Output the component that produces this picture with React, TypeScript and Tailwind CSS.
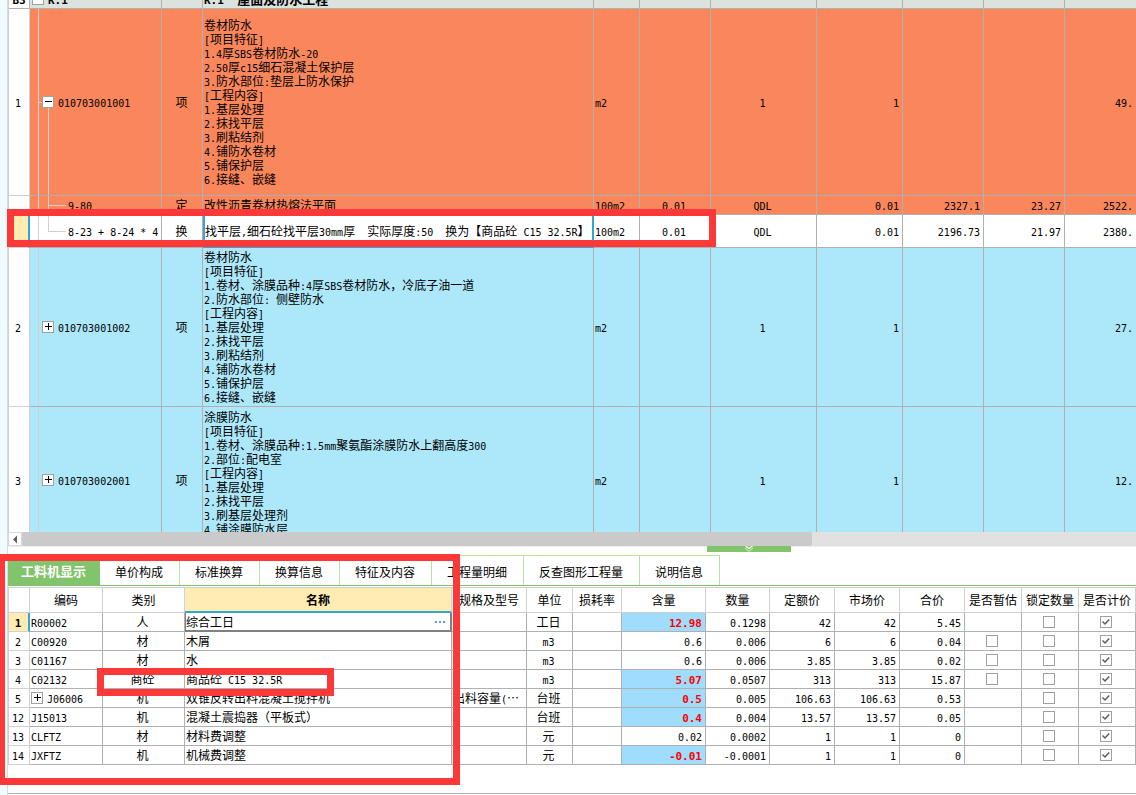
import React from 'react'

/* Half-width characters are set in a monospace face half as wide as a CJK glyph. */
function Mixed({ text, large = false }: { text: string; large?: boolean }) {
  const runs = text.match(/[\x20-\x7e]+|[^\x20-\x7e]+/g) ?? []
  return (
    <>
      {runs.map((run, i) =>
        /^[\x20-\x7e]/.test(run) ? (
          <span
            key={i}
            className={
              large
                ? "font-['DejaVu_Sans_Mono',monospace] text-[11px] leading-none"
                : "font-['DejaVu_Sans_Mono',monospace] text-[10px] leading-none"
            }
          >
            {run}
          </span>
        ) : (
          <span key={i}>{run}</span>
        ),
      )}
    </>
  )
}

function Expander({ open = false, label }: { open?: boolean; label: string }) {
  return (
    <button
      type="button"
      aria-label={label}
      aria-expanded={open}
      className="flex size-3 shrink-0 items-center justify-center border border-[#a0a0a0] bg-white"
    >
      <svg viewBox="0 0 10 10" className="size-[10px]" shapeRendering="crispEdges">
        <rect x="2" y="4" width="7" height="1" fill="#000" />
        {!open && <rect x="5" y="1" width="1" height="7" fill="#000" />}
      </svg>
    </button>
  )
}

function Check({ checked = false, label }: { checked?: boolean; label: string }) {
  return (
    <label className="relative mx-auto block size-3">
      <input
        type="checkbox"
        aria-label={label}
        defaultChecked={checked}
        className="peer block size-3 appearance-none border border-[#a0a0a0] bg-white"
      />
      <svg
        viewBox="0 0 12 12"
        className="pointer-events-none absolute inset-0 hidden size-3 peer-checked:block"
        fill="none"
        stroke="#5c5c6c"
        strokeWidth="1.5"
      >
        <path d="M2.5 5.5 L5 8 L9.2 3.4" />
      </svg>
    </label>
  )
}

type Item = {
  no: string
  code: string
  kind: string
  lines: string[]
  unit: string
  factor?: string
  expr: string
  qty: string
  price?: string
  total?: string
  sum: string
  look: 'orange' | 'white' | 'blue'
  height: string
  child?: boolean
  open?: boolean
  selected?: boolean
  clipped?: boolean
}

const items: Item[] = [
  {
    no: '1', code: '010703001001', kind: '项', unit: 'm2', expr: '1', qty: '1', sum: '49.',
    look: 'orange', height: 'h-[187px]', open: true,
    lines: [
      '卷材防水', '[项目特征]', '1.4厚SBS卷材防水-20', '2.50厚c15细石混凝土保护层', '3.防水部位:垫层上防水保护',
      '[工程内容]', '1.基层处理', '2.抹找平层', '3.刷粘结剂', '4.铺防水卷材', '5.铺保护层', '6.接缝、嵌缝',
    ],
  },
  {
    no: '', code: '9-80', kind: '定', unit: '100m2', factor: '0.01', expr: 'QDL', qty: '0.01',
    price: '2327.1', total: '23.27', sum: '2522.', look: 'orange', height: 'h-[19px]', child: true,
    lines: ['改性沥青卷材热熔法平面'],
  },
  {
    no: '', code: '8-23 + 8-24 * 4', kind: '换', unit: '100m2', factor: '0.01', expr: 'QDL', qty: '0.01',
    price: '2196.73', total: '21.97', sum: '2380.', look: 'white', height: 'h-[33px]', child: true, selected: true,
    lines: ['找平层,细石砼找平层30mm厚  实际厚度:50  换为【商品砼 C15 32.5R】'],
  },
  {
    no: '2', code: '010703001002', kind: '项', unit: 'm2', expr: '1', qty: '1', sum: '27.',
    look: 'blue', height: 'h-[159px]',
    lines: [
      '卷材防水', '[项目特征]', '1.卷材、涂膜品种:4厚SBS卷材防水，冷底子油一道', '2.防水部位: 侧壁防水', '[工程内容]',
      '1.基层处理', '2.抹找平层', '3.刷粘结剂', '4.铺防水卷材', '5.铺保护层', '6.接缝、嵌缝',
    ],
  },
  {
    no: '3', code: '010703002001', kind: '项', unit: 'm2', expr: '1', qty: '1', sum: '12.',
    look: 'blue', height: 'h-[146px]', clipped: true,
    lines: [
      '涂膜防水', '[项目特征]', '1.卷材、涂膜品种:1.5mm聚氨酯涂膜防水上翻高度300', '2.部位:配电室', '[工程内容]',
      '1.基层处理', '2.抹找平层', '3.刷基层处理剂', '4.铺涂膜防水层',
    ],
  },
]

const looks = { orange: 'bg-[#fa865c]', white: 'bg-white', blue: 'bg-[#ade8fa]' }
const cell = 'border-r border-b border-[#b0b0b0] p-0'

function TreeCell({ item }: { item: Item }) {
  return (
    <td className={`relative ${cell}`}>
      <span className="absolute inset-y-0 left-2 w-px bg-[#d0d0d0]" />
      {!item.child && <span className="absolute top-1/2 left-2 h-px w-1 bg-[#d0d0d0]" />}
      {item.open && <span className="absolute top-1/2 bottom-0 left-[18px] w-px bg-[#d0d0d0]" />}
      {item.child && (
        <>
          <span
            className={
              item.selected
                ? 'absolute top-0 bottom-1/2 left-[18px] w-px bg-[#d0d0d0]'
                : 'absolute inset-y-0 left-[18px] w-px bg-[#d0d0d0]'
            }
          />
          <span className="absolute top-1/2 left-[18px] h-px w-[18px] bg-[#d0d0d0]" />
        </>
      )}
      <div className={item.child ? 'relative pl-[38px]' : 'relative flex items-center gap-1 pl-3'}>
        {!item.child && <Expander open={item.open} label={item.code} />}
        <span>
          <Mixed text={item.code} />
        </span>
      </div>
    </td>
  )
}

function BillGrid() {
  return (
    <table className="-mt-[10px] w-full table-fixed border-separate border-spacing-0 border-l border-[#d0d0d0]">
      <colgroup>
        <col className="w-[21px]" />
        <col className="w-[132px]" />
        <col className="w-[41px]" />
        <col />
        <col className="w-[46px]" />
        <col className="w-[71px]" />
        <col className="w-[106px]" />
        <col className="w-[86px]" />
        <col className="w-[81px]" />
        <col className="w-[81px]" />
        <col className="w-[71px]" />
      </colgroup>
      <tbody>
        <tr className="h-[19px] bg-[#dae3de] text-[13px] font-bold">
          <td className={`${cell} bg-white text-center`}>
            <Mixed text="B3" large />
          </td>
          <td className={cell}>
            <div className="flex items-center gap-1 pl-[2px]">
              <Expander open label="K.1" />
              <span>
                <Mixed text="K.1" large />
              </span>
            </div>
          </td>
          <td className={cell} />
          <td className={`${cell} pl-px`}>
            <Mixed text="K.1  屋面及防水工程" large />
          </td>
          {[0, 1, 2, 3, 4, 5].map((i) => (
            <td key={i} className={cell} />
          ))}
          <td className="border-b border-[#b0b0b0] p-0" />
        </tr>
        {items.map((item) => (
          <tr key={item.code} className={`${item.height} ${looks[item.look]}`}>
            <td
              className={
                item.selected
                  ? 'border-r-2 border-b border-r-[#35a6d3] border-b-[#d0d0d0] bg-[#feecb3] p-0'
                  : 'border-r border-b border-[#d0d0d0] bg-white p-0 pr-[2px] text-center'
              }
            >
              <Mixed text={item.no} />
            </td>
            <TreeCell item={item} />
            <td className={`${cell} pr-px text-center`}>{item.kind}</td>
            <td
              className={
                item.selected
                  ? 'border-r-2 border-b border-l-2 border-[#35a6d3] p-0'
                  : `${cell} pl-px ${item.clipped ? 'pb-[14px]' : ''}`
              }
            >
              {item.lines.map((line, i) => (
                <div key={i}>
                  <Mixed text={line} />
                </div>
              ))}
            </td>
            <td className={`${cell} pl-px`}>
              <Mixed text={item.unit} />
            </td>
            <td className={`${cell} pr-[2px] text-center`}>
              <Mixed text={item.factor ?? ''} />
            </td>
            <td className={`${cell} pr-[2px] text-center`}>
              <Mixed text={item.expr} />
            </td>
            <td className={`${cell} pr-[3px] text-right`}>
              <Mixed text={item.qty} />
            </td>
            <td className={`${cell} pr-[3px] text-right`}>
              <Mixed text={item.price ?? ''} />
            </td>
            <td className={`${cell} pr-[3px] text-right`}>
              <Mixed text={item.total ?? ''} />
            </td>
            <td className="border-b border-[#b0b0b0] p-0 pr-[3px] text-right">
              <Mixed text={item.sum} />
            </td>
          </tr>
        ))}
      </tbody>
    </table>
  )
}

const tabs = ['工料机显示', '单价构成', '标准换算', '换算信息', '特征及内容', '工程量明细', '反查图形工程量', '说明信息']

const headings = [
  '', '编码', '类别', '名称', '规格及型号', '单位', '损耗率', '含量', '数量', '定额价', '市场价', '合价',
  '是否暂估', '锁定数量', '是否计价',
]

type Resource = {
  no: string
  code: string
  kind: string
  name: string
  spec?: string
  unit: string
  content: string
  changed: boolean
  qty: string
  quota: string
  market: string
  sum: string
  estimate?: boolean
  nested?: boolean
}

const resources: Resource[] = [
  { no: '1', code: 'R00002', kind: '人', name: '综合工日', unit: '工日', content: '12.98', changed: true, qty: '0.1298', quota: '42', market: '42', sum: '5.45' },
  { no: '2', code: 'C00920', kind: '材', name: '木屑', unit: 'm3', content: '0.6', changed: false, qty: '0.006', quota: '6', market: '6', sum: '0.04', estimate: true },
  { no: '3', code: 'C01167', kind: '材', name: '水', unit: 'm3', content: '0.6', changed: false, qty: '0.006', quota: '3.85', market: '3.85', sum: '0.02', estimate: true },
  { no: '4', code: 'C02132', kind: '商砼', name: '商品砼 C15 32.5R', unit: 'm3', content: '5.07', changed: true, qty: '0.0507', quota: '313', market: '313', sum: '15.87', estimate: true },
  { no: '5', code: 'J06006', kind: '机', name: '双锥反转出料混凝土搅拌机', spec: '出料容量(⋯', unit: '台班', content: '0.5', changed: true, qty: '0.005', quota: '106.63', market: '106.63', sum: '0.53', nested: true },
  { no: '12', code: 'J15013', kind: '机', name: '混凝土震捣器（平板式）', unit: '台班', content: '0.4', changed: true, qty: '0.004', quota: '13.57', market: '13.57', sum: '0.05' },
  { no: '13', code: 'CLFTZ', kind: '材', name: '材料费调整', unit: '元', content: '0.02', changed: false, qty: '0.0002', quota: '1', market: '1', sum: '0' },
  { no: '14', code: 'JXFTZ', kind: '机', name: '机械费调整', unit: '元', content: '-0.01', changed: true, qty: '-0.0001', quota: '1', market: '1', sum: '0' },
]

function ResourceTable() {
  return (
    <table className="mt-px w-full table-fixed border-separate border-spacing-0 border-t border-l border-[#d0d0d0]">
      <colgroup>
        <col className="w-[21px]" />
        <col className="w-[73px]" />
        <col className="w-[82px]" />
        <col />
        <col className="w-[75px]" />
        <col className="w-[46px]" />
        <col className="w-[49px]" />
        <col className="w-[84px]" />
        <col className="w-[64px]" />
        <col className="w-[65px]" />
        <col className="w-[65px]" />
        <col className="w-[65px]" />
        <col className="w-[57px]" />
        <col className="w-[57px]" />
        <col className="w-[57px]" />
      </colgroup>
      <thead>
        <tr className="h-[25px]">
          {headings.map((h) => (
            <th
              key={h}
              scope="col"
              className={
                h === '名称'
                  ? 'border-r border-b-2 border-r-[#d0d0d0] border-b-[#35a6d3] bg-[#feecb3] p-0 text-center font-bold'
                  : 'border-r border-b border-[#d0d0d0] p-0 text-center font-normal whitespace-nowrap'
              }
            >
              {h}
            </th>
          ))}
        </tr>
      </thead>
      <tbody>
        {resources.map((r, i) => (
          <tr key={r.code} className="h-[19px]">
            <td
              className={
                i === 0
                  ? 'border-r-2 border-b border-r-[#35a6d3] border-b-[#d0d0d0] bg-[#feecb3] p-0 pr-px text-center font-bold'
                  : 'border-r border-b border-[#d0d0d0] p-0 pr-[2px] text-center'
              }
            >
              <Mixed text={r.no} large={i === 0} />
            </td>
            <td className={`${cell} pl-px`}>
              <div className="flex items-center gap-1">
                {r.nested && <Expander label={r.code} />}
                <span>
                  <Mixed text={r.code} />
                </span>
              </div>
            </td>
            <td className={`${cell} pr-[2px] text-center`}>{r.kind}</td>
            {i === 0 ? (
              <td className="border-r-2 border-b-2 border-l border-[#808080] p-0">
                <div className="flex h-4 items-center pr-1">
                  <input
                    aria-label="名称"
                    defaultValue={r.name}
                    className="h-4 min-w-0 flex-1 bg-transparent outline-none"
                  />
                  <button type="button" aria-label="选择" className="flex h-4 items-center gap-[2px] pr-px">
                    <span className="size-[2px] bg-[#5a9fd0]" />
                    <span className="size-[2px] bg-[#5a9fd0]" />
                    <span className="size-[2px] bg-[#5a9fd0]" />
                  </button>
                </div>
              </td>
            ) : (
              <td className={`${cell} pl-px`}>
                <Mixed text={r.name} />
              </td>
            )}
            <td className={`${cell} pl-px`}>
              <Mixed text={r.spec ?? ''} />
            </td>
            <td className={`${cell} pr-[2px] text-center`}>
              <Mixed text={r.unit} />
            </td>
            <td className={cell} />
            <td
              className={
                r.changed
                  ? `${cell} bg-[#9fdcfd] pr-[3px] text-right font-bold text-[#ff0000]`
                  : `${cell} pr-[3px] text-right`
              }
            >
              <Mixed text={r.content} large={r.changed} />
            </td>
            <td className={`${cell} pr-[3px] text-right`}>
              <Mixed text={r.qty} />
            </td>
            <td className={`${cell} pr-[3px] text-right`}>
              <Mixed text={r.quota} />
            </td>
            <td className={`${cell} pr-[3px] text-right`}>
              <Mixed text={r.market} />
            </td>
            <td className={`${cell} pr-[3px] text-right`}>
              <Mixed text={r.sum} />
            </td>
            <td className={`${cell} pr-[2px]`}>{r.estimate && <Check label={`是否暂估 ${r.code}`} />}</td>
            <td className={`${cell} pr-[2px]`}>
              <Check label={`锁定数量 ${r.code}`} />
            </td>
            <td className={`${cell} pr-[2px]`}>
              <Check checked label={`是否计价 ${r.code}`} />
            </td>
          </tr>
        ))}
      </tbody>
    </table>
  )
}

export default function App() {
  return (
    <div className="flex h-screen overflow-hidden bg-white font-['Noto_Sans_CJK_SC',sans-serif] text-[12px] leading-[14px] whitespace-pre text-black">
      <div className="w-2 shrink-0 border-r border-[#d8dcdc] bg-[#f0fcff]" />
      <main className="flex min-w-0 flex-1 flex-col">
        <section className="relative min-h-0 flex-1">
          <div className="h-full overflow-hidden">
            <BillGrid />
          </div>
          <div className="pointer-events-none absolute top-[209px] -left-px h-[38px] w-[709px] border-[7px] border-[#fd3838]" />
        </section>

        <section className="relative shrink-0">
          <div className="flex h-[14px] bg-[#e1e1e1]">
            <button
              type="button"
              aria-label="向左滚动"
              className="flex w-[14px] items-center justify-center border border-[#d8d8d8] bg-white"
            >
              <svg viewBox="0 0 6 9" className="h-[9px] w-[6px]">
                <path d="M5 0.5 V8.5 L1 4.5 Z" fill="#606068" />
              </svg>
            </button>
            <div className="w-[70%] rounded-xs bg-[#cacaca]" />
          </div>
          <div className="flex h-[9px] items-start border-t border-[#f0f0f0]">
            <button
              type="button"
              aria-label="折叠"
              className="-mt-px ml-[62%] flex h-[6px] w-[84px] items-start justify-center bg-[#82c46c]"
            >
              <svg viewBox="0 0 10 6" className="h-[6px] w-[10px]" fill="none" stroke="#fff">
                <path d="M1.5 0 L5 2.5 L8.5 0" strokeWidth="1.2" />
                <path d="M1 2 L5 5.3 L9 2" strokeWidth="1" opacity="0.7" />
              </svg>
            </button>
          </div>
          <div role="tablist" className="flex border-b border-[#7fc26a]">
            {tabs.map((t, i) => (
              <button
                key={t}
                type="button"
                role="tab"
                aria-selected={i === 0}
                className={
                  i === 0
                    ? 'h-[30px] bg-[#82c46c] pr-[14px] pl-[13px] pt-px text-[13px] font-bold text-white'
                    : 'h-[30px] border-t border-r border-[#b8e2a0] pr-4 pl-[15px] pt-[2px]'
                }
              >
                {t}
              </button>
            ))}
          </div>
          <ResourceTable />
          <div className="mt-7 mb-px border-b border-[#b0b0b0]" />
          <div className="pointer-events-none absolute top-[22px] -left-[10px] h-[231px] w-[462px] border-[7px] border-[#fd3838]" />
          <div className="pointer-events-none absolute top-[136px] left-[89px] h-[28px] w-[237px] border-[7px] border-[#fd3838]" />
        </section>
      </main>
    </div>
  )
}
